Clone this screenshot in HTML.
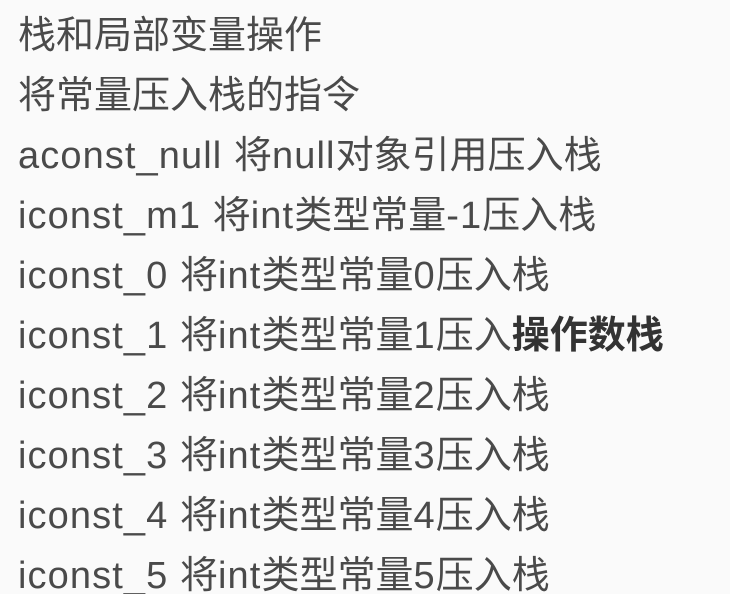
<!DOCTYPE html>
<html><head><meta charset="utf-8"><style>
html,body{margin:0;padding:0;background:#fafafa;width:730px;height:594px;overflow:hidden}
.w{padding:6px 0 0 18px;font-family:"Liberation Sans","Noto Sans CJK SC",sans-serif;font-size:38px;line-height:60px;color:#4a4a4a;white-space:nowrap}
.w div{height:60px}
.l{letter-spacing:1.1px}
b{font-weight:bold;color:#333}
</style></head><body><div class="w">
<div>栈和局部变量操作</div>
<div>将常量压入栈的指令</div>
<div><span class="l">aconst_null </span>将<span class="l">null</span>对象引用压入栈</div>
<div><span class="l">iconst_m1 </span>将<span class="l">int</span>类型常量<span class="l">-1</span>压入栈</div>
<div><span class="l">iconst_0 </span>将<span class="l">int</span>类型常量<span class="l">0</span>压入栈</div>
<div><span class="l">iconst_1 </span>将<span class="l">int</span>类型常量<span class="l">1</span>压入<b>操作数栈</b></div>
<div><span class="l">iconst_2 </span>将<span class="l">int</span>类型常量<span class="l">2</span>压入栈</div>
<div><span class="l">iconst_3 </span>将<span class="l">int</span>类型常量<span class="l">3</span>压入栈</div>
<div><span class="l">iconst_4 </span>将<span class="l">int</span>类型常量<span class="l">4</span>压入栈</div>
<div><span class="l">iconst_5 </span>将<span class="l">int</span>类型常量<span class="l">5</span>压入栈</div>
</div></body></html>
